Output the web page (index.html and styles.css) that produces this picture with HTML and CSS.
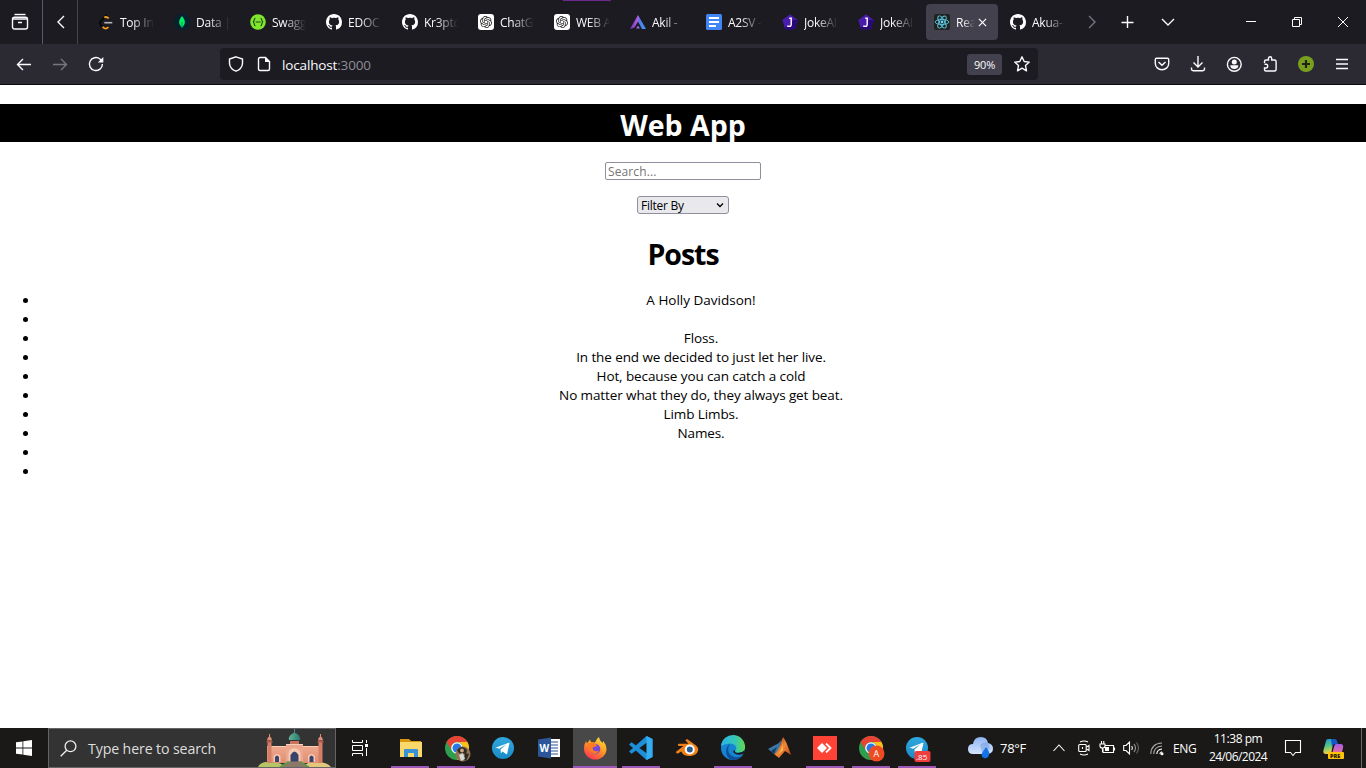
FILE: index.html
```html
<!DOCTYPE html>
<html lang="en">
<head>
<meta charset="utf-8">
<title>Web App</title>
<link rel="stylesheet" href="styles.css">
</head>
<body>
<svg class="defs" width="0" height="0">
  <defs>
    <linearGradient id="gAkil" x1="0" x2="1"><stop offset="0" stop-color="#7133b8"/><stop offset=".48" stop-color="#b45be0"/><stop offset=".6" stop-color="#4d7fe8"/><stop offset="1" stop-color="#3f95f0"/></linearGradient>
    <linearGradient id="gEdge" x1="0" y1="0" x2="1" y2="0"><stop offset="0" stop-color="#2bb4e8"/><stop offset=".6" stop-color="#35c7b4"/><stop offset="1" stop-color="#62d948"/></linearGradient>
    <linearGradient id="gFire" x1=".8" y1="0" x2=".2" y2="1"><stop offset="0" stop-color="#ffe03f"/><stop offset=".45" stop-color="#ff9a1f"/><stop offset="1" stop-color="#ff2a5a"/></linearGradient>
    <linearGradient id="gTele" x1="0" y1="0" x2="0" y2="1"><stop offset="0" stop-color="#2fa9df"/><stop offset="1" stop-color="#1b8ac6"/></linearGradient>
    <linearGradient id="gCloud" x1="0" y1="0" x2="0" y2="1"><stop offset="0" stop-color="#8db4f2"/><stop offset="1" stop-color="#d5e4ff"/></linearGradient>
    <linearGradient id="gMat" x1="0" y1="0" x2="1" y2="1"><stop offset="0" stop-color="#8c2417"/><stop offset=".5" stop-color="#f08a35"/><stop offset="1" stop-color="#b8351a"/></linearGradient>
    <linearGradient id="gMosque" x1="0" y1="0" x2="0" y2="1"><stop offset="0" stop-color="#f0a88c"/><stop offset="1" stop-color="#dd8f74"/></linearGradient>
    <linearGradient id="gDome" x1="0" y1="0" x2="1" y2="0"><stop offset="0" stop-color="#64b39a"/><stop offset="1" stop-color="#287a68"/></linearGradient>
    <linearGradient id="gCop" x1="0" y1="0" x2=".2" y2="1"><stop offset="0" stop-color="#1a8fe0"/><stop offset=".5" stop-color="#4fc48a"/><stop offset="1" stop-color="#f1d23c"/></linearGradient>
    <linearGradient id="gCop2" x1="0" y1="0" x2="0" y2="1"><stop offset="0" stop-color="#a45ce8"/><stop offset="1" stop-color="#f5728c"/></linearGradient>
    <symbol id="github" viewBox="0 0 16 16"><path fill="#fff" d="M8 0C3.580 0 0 3.580 0 8c0 3.540 2.290 6.530 5.470 7.590.4.070.55-.17.55-.38 0-.19-.01-.82-.01-1.490-2.010.37-2.530-.49-2.690-.94-.09-.23-.48-.94-.82-1.130-.28-.15-.68-.52-.01-.53.63-.01 1.080.58 1.230.82.72 1.210 1.870.87 2.330.66.07-.52.28-.87.51-1.070-1.780-.2-3.640-.89-3.640-3.950 0-.87.31-1.590.82-2.150-.08-.2-.36-1.020.08-2.120 0 0 .67-.21 2.200.82.64-.18 1.320-.27 2-.27s1.360.09 2 .27c1.530-1.040 2.200-.82 2.200-.82.44 1.100.16 1.920.08 2.120.51.56.82 1.270.82 2.150 0 3.070-1.870 3.750-3.650 3.950.29.25.54.73.54 1.480 0 1.070-.01 1.930-.01 2.200 0 .21.15.46.55.38A8.010 8.010 0 0 0 16 8c0-4.420-3.580-8-8-8z"/></symbol>
    <symbol id="gpt" viewBox="0 0 24 24"><rect width="24" height="24" rx="4.500" fill="#fff"/><path transform="translate(3 3) scale(.75)" fill="#222" d="M22.282 9.821a5.985 5.985 0 0 0-.516-4.910 6.046 6.046 0 0 0-6.510-2.900A6.065 6.065 0 0 0 4.981 4.182a5.985 5.985 0 0 0-3.998 2.900 6.046 6.046 0 0 0 .743 7.097 5.980 5.980 0 0 0 .511 4.911 6.051 6.051 0 0 0 6.515 2.900A5.985 5.985 0 0 0 13.260 24a6.056 6.056 0 0 0 5.772-4.206 5.990 5.990 0 0 0 3.998-2.900 6.056 6.056 0 0 0-.748-7.073zM13.260 22.430a4.476 4.476 0 0 1-2.876-1.040l.142-.081 4.778-2.758a.795.795 0 0 0 .393-.681v-6.737l2.020 1.169a.071.071 0 0 1 .038.052v5.583a4.504 4.504 0 0 1-4.495 4.493zM3.600 18.304a4.471 4.471 0 0 1-.535-3.014l.142.085 4.783 2.759a.771.771 0 0 0 .781 0l5.843-3.369v2.332a.080.080 0 0 1-.033.062L9.740 19.950a4.499 4.499 0 0 1-6.140-1.646zM2.341 7.896a4.485 4.485 0 0 1 2.366-1.973V11.600a.766.766 0 0 0 .388.677l5.814 3.354-2.020 1.169a.076.076 0 0 1-.071 0l-4.830-2.787A4.504 4.504 0 0 1 2.341 7.872zm16.596 3.856-5.833-3.388L15.119 7.200a.076.076 0 0 1 .071 0l4.830 2.791a4.494 4.494 0 0 1-.676 8.105v-5.678a.790.790 0 0 0-.407-.666zm2.011-3.023-.142-.085-4.774-2.782a.776.776 0 0 0-.785 0L9.409 9.230V6.897a.066.066 0 0 1 .028-.061l4.830-2.787a4.499 4.499 0 0 1 6.681 4.660zM8.307 12.863l-2.020-1.164a.080.080 0 0 1-.038-.057V6.075a4.499 4.499 0 0 1 7.376-3.453l-.142.080L8.704 5.460a.795.795 0 0 0-.393.681zm1.097-2.365 2.602-1.500 2.607 1.500v2.999l-2.597 1.500-2.607-1.500z"/></symbol>
    <symbol id="joke" viewBox="0 0 16 16"><path fill="#4a1cae" d="M8 .3 15.600 6 13 15.200H3L.4 6z"/><path fill="#2a087a" d="M15.600 6 13 15.200H3L2.400 13 8 12l3-6z"/><path fill="none" stroke="#fff" stroke-width="1.400" d="M7.200 4.200h2v6q0 2.200-2 2.200-1.200 0-1.900-.7"/></symbol>
    <symbol id="chrome" viewBox="0 0 24 24"><circle cx="12" cy="12" r="12" fill="#2f9e4d"/><path fill="#e94335" d="M1.600 6A12 12 0 0 1 22.400 6H12a6 6 0 0 0-5.600 8z"/><path fill="#fbc116" d="M22.400 6A12 12 0 0 1 12 24l5.200-9A6 6 0 0 0 12 6z"/><circle cx="12" cy="12" r="5.800" fill="#fff"/><circle cx="12" cy="12" r="4.500" fill="#2878e8"/></symbol>
    <symbol id="telegram" viewBox="0 0 24 24"><circle cx="12" cy="12" r="11" fill="url(#gTele)"/><path fill="#fff" d="m4.600 11.800 13-5q1-.3.8.8l-2.200 10q-.3 1-1.200.4l-3.300-2.500-1.800 1.700-.4-3.600 5.900-5.400-7.200 4.600-3.400-1q-1-.4-.2-1z"/></symbol>
  </defs>
</svg>

<header class="browser">
  <div class="tabstrip">
    <div class="view"><svg width="18" height="18" viewBox="0 0 18 18" class="line"><path d="M3.500 1.500h11"/><rect x="1.500" y="4.300" width="15" height="11.700" rx="2"/><path d="M1.500 6h15M7 9.500h4"/></svg></div>
    <div class="back-tabs"><svg width="10" height="14" viewBox="0 0 10 14" class="line"><path d="M8 1 2 7l6 6"/></svg></div>
    <nav class="tabs">
      <div class="tab"><svg viewBox="0 0 16 16"><path fill="none" stroke="#090909" stroke-width="2" d="M8.700 1 2.600 7.200q-1.500 1.700 0 3.600l2 2"/><path fill="none" stroke="#f7a11b" stroke-width="1.800" d="M6.300 3.500q2-1.400 4.400.9M4.600 12.800q2.600 3.300 5.800.3"/><path stroke="#b5b5b5" stroke-width="1.600" d="M6.300 8.700h8"/></svg><span>Top In</span></div>
      <div class="tab"><svg viewBox="0 0 16 16"><circle cx="8" cy="8" r="8" fill="#06202f"/><path fill="#00ed64" d="M8 2c4 4.500 3.600 8.500 0 11.300C4.400 10.500 4 6.500 8 2z"/><path stroke="#0a9a58" d="M8 8v6"/></svg><span>Data |</span></div>
      <div class="tab"><svg viewBox="0 0 16 16"><circle cx="8" cy="8" r="7.800" fill="#7fe52d"/><path fill="none" stroke="#20451b" stroke-width="1.100" d="M5.500 4.200C3.500 4.200 5 7.500 3 8c2 .5.500 3.800 2.500 3.800M10.500 4.200c2 0 .5 3.300 2.500 3.800-2 .5-.5 3.800-2.500 3.800M5.600 8h5"/></svg><span>Swagg</span></div>
      <div class="tab"><svg><use href="#github"/></svg><span>EDOC</span></div>
      <div class="tab"><svg><use href="#github"/></svg><span>Kr3ptc</span></div>
      <div class="tab"><svg><use href="#gpt"/></svg><span>ChatG</span></div>
      <div class="tab"><svg><use href="#gpt"/></svg><span>WEB A</span></div>
      <div class="tab"><svg viewBox="0 0 16 16"><path fill="url(#gAkil)" d="M8 1 16 15h-4L8 7.500 4.500 13.500 0 15zM8 11.500l2 3H6z"/></svg><span>Akil -</span></div>
      <div class="tab"><svg viewBox="0 0 16 16"><rect width="16" height="16" rx="1.500" fill="#4285f4"/><path stroke="#fff" stroke-width="2" d="M3 4h10M3 8h10M3 12h7"/></svg><span>A2SV -</span></div>
      <div class="tab"><svg><use href="#joke"/></svg><span>JokeAI</span></div>
      <div class="tab"><svg><use href="#joke"/></svg><span>JokeAI</span></div>
      <div class="tab active"><svg viewBox="0 0 16 16"><rect width="16" height="16" rx="2" fill="#222"/><g fill="none" stroke="#5ac8e0" stroke-width=".9"><ellipse cx="8" cy="8" rx="6.800" ry="2.600"/><ellipse cx="8" cy="8" rx="6.800" ry="2.600" transform="rotate(60 8 8)"/><ellipse cx="8" cy="8" rx="6.800" ry="2.600" transform="rotate(120 8 8)"/></g><circle cx="8" cy="8" r="1.400" fill="#61dafb"/></svg><span>Rea</span><svg class="close line" viewBox="0 0 10 10"><path d="m1 1 8 8M9 1 1 9"/></svg></div>
      <div class="tab"><svg><use href="#github"/></svg><span>Akua-</span></div>
    </nav>
    <div class="tab-tools">
      <svg width="10" height="14" viewBox="0 0 10 14" class="line dim"><path d="m2 1 6 6-6 6"/></svg>
      <svg width="12" height="12" viewBox="0 0 12 12" class="line"><path d="M6.500 0v12M.5 6.500h12"/></svg>
      <svg width="14" height="8" viewBox="0 0 14 8" class="line"><path d="m1 1 6 6 6-6"/></svg>
    </div>
    <div class="window-tools">
      <svg width="10" height="10" viewBox="0 0 10 10" class="thin"><path d="M0 4.500h10"/></svg>
      <svg width="10" height="10" viewBox="0 0 10 10" class="thin"><path d="M.5 2.500h7v7h-7zM2.500 2.500v-2h7v7h-2"/></svg>
      <svg width="10" height="10" viewBox="0 0 10 10" class="thin"><path d="m0 0 10 10M10 0 0 10"/></svg>
    </div>
  </div>
  <div class="toolbar">
    <div class="nav-tools">
      <svg width="16" height="16" viewBox="0 0 16 16" class="line"><path d="M15 8.500H1.500M7 3 1.500 8.500 7 14"/></svg>
      <svg width="16" height="16" viewBox="0 0 16 16" class="line dim"><path d="M1 8.500h13.500M9 3l5.500 5.500L9 14"/></svg>
      <svg width="16" height="16" viewBox="0 0 16 16" class="line"><path d="M14.400 8A6.500 6.500 0 1 1 12 3l2 2"/><path fill="#fbfbfe" stroke="none" d="M15.300 1v5.500H9.800z"/></svg>
    </div>
    <div class="urlbar">
      <svg width="16" height="16" viewBox="0 0 16 16" class="line"><path d="M8 .8 14.500 3v4.500q-.5 5.500-6.500 7.700Q2 13 1.500 7.500V3z"/></svg>
      <svg width="14" height="16" viewBox="0 0 14 16" class="line"><path d="M3 1.500h5.500l4 4V13q0 1.500-1.500 1.500H3q-1.500 0-1.500-1.500V3q0-1.500 1.500-1.500z"/><path fill="#fbfbfe" stroke="none" d="M8 1v5h5z"/></svg>
      <span class="url">localhost<i>:3000</i></span>
      <span class="zoom">90%</span>
      <svg width="16" height="16" viewBox="0 0 16 16" class="line"><path stroke-linejoin="round" d="m8 .8 2.200 4.700 5.100.6-3.800 3.500 1 5.200L8 12.200l-4.500 2.600 1-5.200L.7 6.100l5.100-.6z"/></svg>
    </div>
    <div class="ext-tools">
      <svg width="16" height="16" viewBox="0 0 16 16" class="line"><path d="M2.500 2.200h11q1.200 0 1.200 1.200V7.500a6.500 6 0 0 1-13.400 0V3.400q0-1.200 1.200-1.200zM4.500 6 8 9.300 11.500 6"/></svg>
      <svg width="16" height="16" viewBox="0 0 16 16" class="line"><path d="M8 0v10.500M3.500 6.500 8 11l4.500-4.500M1.500 11.500V13q0 1.700 1.700 1.700h9.600q1.700 0 1.700-1.700v-1.500"/></svg>
      <svg width="16" height="16" viewBox="0 0 16 16" class="line"><circle cx="8.300" cy="8.300" r="6.900"/><circle cx="8.300" cy="5.900" r="2.500" fill="#fbfbfe" stroke="none"/><path fill="#fbfbfe" stroke="none" d="M4.300 9.300h8q0 3.800-4 3.800t-4-3.800z"/></svg>
      <svg width="16" height="16" viewBox="0 0 16 16" class="line"><path d="M2.500 7V5.500Q2.500 4 4 4h2.500V2.500q0-1.700 1.600-1.700t1.600 1.700V4h2.800q1.600 0 1.600 1.500v8q0 1.500-1.600 1.500H4q-1.500 0-1.500-1.500V12H4q1.700 0 1.700-1.900T4 8.200H2.500"/></svg>
      <svg width="16" height="16" viewBox="0 0 16 16"><circle cx="8" cy="8" r="8" fill="#78a01e"/><path stroke="#202514" stroke-width="2.200" d="M8 4v8M4 8h8"/></svg>
      <svg width="14" height="16" viewBox="0 0 14 16" class="line"><path d="M1 3.500h12M1 8h12M1 12.500h12"/></svg>
    </div>
  </div>
</header>

<main class="page">
  <h1 class="title">Web App</h1>
  <input class="search" type="text" placeholder="Search...">
  <div class="select"><span>Filter By</span><svg width="8" height="6" viewBox="0 0 8 6"><path fill="none" stroke="#000" stroke-width="1.300" d="m1 1.500 3 3 3-3"/></svg></div>
  <h2 class="posts">Posts</h2>
  <ul class="list">
    <li>A Holly Davidson!</li>
    <li></li>
    <li>Floss.</li>
    <li>In the end we decided to just let her live.</li>
    <li>Hot, because you can catch a cold</li>
    <li>No matter what they do, they always get beat.</li>
    <li>Limb Limbs.</li>
    <li>Names.</li>
    <li></li>
    <li></li>
  </ul>
</main>

<footer class="taskbar">
  <div class="start"><svg width="16" height="16" viewBox="0 0 16 16"><path fill="#fff" d="m0 2.300 6.500-.9v6.200H0zM7.300 1.300 16 0v7.600H7.300zM0 8.400h6.500v6.200L0 13.700zM7.300 8.400H16V16l-8.700-1.300z"/></svg></div>
  <div class="searchbox">
    <svg width="17" height="17" viewBox="0 0 17 17"><g fill="none" stroke="#eee" stroke-width="1.300"><circle cx="10.500" cy="6.300" r="5.400"/><path d="M6.700 10.200.7 16.200"/></g></svg>
    <span>Type here to search</span>
    <svg class="mosque" width="74" height="38" viewBox="0 0 74 38">
      <path fill="#b5c565" d="M-1 38q3-6 13-5 10 0 14 5z"/><path fill="#e2c77d" d="M44 38q5-6 14-5 10 0 14 5z"/>
      <path fill="url(#gMosque)" d="M8 17h54v17H8z"/>
      <path fill="#d67f66" d="M8.500 12h4v22h-4zM59.500 12h4v22h-4z"/>
      <path fill="#b3594b" d="M7.500 12h6v1.500h-6zM58.500 12h6v1.500h-6z"/>
      <path fill="#e08d73" d="M8 11.500q0-3 2.500-4.500 2.500 1.500 2.500 4.500zM59 11.500q0-3 2.500-4.500 2.500 1.500 2.500 4.500z"/>
      <path stroke="#e08d73" d="M10.500 5v3M61.500 5v3"/>
      <path fill="#ca745d" d="M31 12h9v3.500h-9z"/>
      <path fill="url(#gDome)" d="M30 11q-1-5 5.500-7.500Q42 6 41 11z"/><path stroke="#398f7b" d="M35.500 0v4"/>
      <path stroke="#f9cdb8" d="M13 17.500h14M27 15.500h17M44 17.500h15"/><path fill="#eda78d" d="M27 16h17v18H27z"/>
      <path fill="#f8c9b2" d="M29.500 34V25q0-5 6-6 6 1 6 6v9zM14.500 33v-6q3.500-4 7 0v6zM49 33v-6q3.500-4 7 0v6z"/>
      <path fill="#394369" d="M31.500 33v-7q4-7 8 0v7zM16 33v-5q2-3 4 0v5zM50.500 33v-5q2-3 4 0v5z"/>
      <path fill="#69934c" d="m29 32-9 6h8l5-5zM42 32l9 6h-8l-5-5z"/>
      <path fill="#8b7868" d="M32 32.500h7.500l7 5.500h-22z"/>
    </svg>
  </div>
  <div class="taskview"><svg width="16" height="16" viewBox="0 0 16 16" class="thin"><path d="M.5 0v2.500h10V0M.5 5.500h10v5H.5zM.5 16v-2.500h10V16M14.500 0v3M14.500 8v8"/><path fill="#fff" stroke="none" d="M13 4h3v3h-3z"/></svg></div>
  <div class="apps">
    <div class="app on"><svg viewBox="0 0 24 24"><path fill="#d9970c" d="M1 3h9l2 2h10v4H1z"/><path fill="#fbd86b" d="M1 6h22v15H1z"/><path fill="#3892d6" d="M5 21v-7q0-1 1-1h12q1 0 1 1v7h-4v-4H9v4z"/></svg></div>
    <div class="app on"><svg viewBox="0 0 24 24"><use href="#chrome"/><circle cx="18" cy="18" r="7.500" fill="#8e7354"/><path fill="#302923" d="M12 14q5-6 10 0l-1 4-7-1z"/><circle cx="17" cy="14.500" r="1.900" fill="#d0a482"/><path fill="#302923" d="m20 17 4 1-3 7-2-1z"/><path fill="#d8d8d4" d="m14 19 4-2 2 6-4 2z"/></svg></div>
    <div class="app"><svg><use href="#telegram"/></svg></div>
    <div class="app"><svg viewBox="0 0 24 24"><path fill="#fff" d="M11 3h12v18H11z"/><path stroke="#2b579a" stroke-width="1.200" d="M14 6h7M14 9h7M14 12h7M14 15h7M14 18h7"/><path fill="#2b579a" d="m1 3.500 13-2v21l-13-2z"/><text x="2.500" y="16" class="word">W</text></svg></div>
    <div class="app on current"><svg viewBox="0 0 24 24"><path fill="url(#gFire)" d="M1 13Q1 8 3 5l1 2.500L7 3.500 8 6l4 .5Q13 3 16 1q0 3 3.500 6l.8-2Q23.500 9 23.500 13a11.200 10.500 0 0 1-22.500 0z"/><circle cx="12" cy="13" r="5.300" fill="#7548db"/><path fill="#ff7a20" d="M5 8q3-2 6-1 2 1 3 2.500-1 1.500-4 1.500-1 3 2 4 3 1 4-1-1 4-5 4-6-2-6-10z"/></svg></div>
    <div class="app on"><svg viewBox="0 0 24 24"><path fill="#1d8fd8" d="m17.500 0 6 3v18l-6 3L0 8.500l2.500-2.300L18 17.500v-11L2.500 17.800 0 15.500z"/><path fill="#35adf2" d="m17.500 0 6 3v18l-6 3z"/></svg></div>
    <div class="app"><svg viewBox="0 0 24 24"><path fill="#ee8017" d="M10.500 4.500q.5-1.700 2-1.200L21 9.500q2.500 2 2.200 5a9 7.500 0 0 1-17 1L3 17.500q-2 .3-2-1.800L8.500 10H3.500Q2 8.500 3.500 7.700h10z"/><circle cx="14.800" cy="13.500" r="5" fill="#fff"/><circle cx="14.800" cy="13.500" r="3" fill="#245b91"/></svg></div>
    <div class="app on"><svg viewBox="0 0 24 24"><circle cx="12" cy="12" r="12" fill="#1685d1"/><path fill="url(#gEdge)" d="M0 10A12 12 0 0 1 24 12q-1 5-7 4.500-3 0-3-2 2-1 1-4-2-3-6-3-5 0-9 2.500z"/><path fill="#0d4f98" d="M9 8q-3 4-1 9 3 5 10 4l3-1q-4 4-9 4C4 23 3 11 9 8z"/><path fill="#1a1918" d="M14 14q-1 3 3 3 4 0 7-3l-1.500 4q-6 2-9.500-1-2-2 1-3z"/></svg></div>
    <div class="app"><svg viewBox="0 0 24 24"><path fill="#3878a8" d="m1 13 7-4q4-1 7-6l-4 13-4 2z"/><path fill="#173c5e" d="m4 15 6-4-3 7z"/><path fill="url(#gMat)" d="M16 1q3 3 8 18l-6-4-6 7-5-4q4-1 9-17z"/><path fill="#f9c25d" d="M15 5q1 8-4 14l5-5z"/></svg></div>
    <div class="app on"><svg viewBox="0 0 24 24"><path fill="#ff4337" d="M0 0h24v24H0z"/><path fill="#fff" d="m9 7 5 5-5 5-5-5z"/><path fill="none" stroke="#fff" stroke-width="1.800" d="m13 7.500 4.500 4.500-4.500 4.500"/></svg></div>
    <div class="app on"><svg viewBox="0 0 24 24"><use href="#chrome"/><circle cx="17.500" cy="17.500" r="8" fill="#ef4b23"/><text x="14.500" y="21.300" class="letter">A</text></svg></div>
    <div class="app on"><svg viewBox="0 0 24 24"><use href="#telegram"/><rect x="9.500" y="15" width="16" height="11" rx="2" fill="#ef3e3e"/><text x="11" y="23.800" class="count">.85</text></svg></div>
  </div>
  <div class="weather"><svg width="25" height="22" viewBox="0 0 25 22"><path fill="url(#gCloud)" d="M5 17q-5 0-5-5t5-5q1-7 8-7 6 0 7 6 5 1 5 5.500T20 17z"/><path fill="#6f99e0" opacity=".5" d="M12 8q4-4 8-2l2 6-8 3z"/><path fill="#1473e6" d="M18 10q4 5 3 8-1.500 4-5 3-3.500-1.500-2-5z"/></svg><span>78°F</span></div>
  <div class="tray">
    <svg width="12" height="8" viewBox="0 0 12 8" class="trayline"><path d="m.5 7 5.500-6 5.500 6"/></svg>
    <svg width="12" height="16" viewBox="0 0 12 16" class="trayline"><rect x=".7" y="4.500" width="7.500" height="7" rx="1"/><path d="m8.500 7 2.500-1.500v5L8.500 9M2 2q4-2 8 0M2 14q4 2 8 0M4.500 7v2"/></svg>
    <svg width="16" height="14" viewBox="0 0 16 14" class="trayline"><path d="M6 4.500h8.500v7H4V8M15.500 6.500v3M1 3h5v2Q6 7 3.500 7T1 5zM2.500 0v3M4.800 0v3M3.500 7v4"/><path fill="#fff" stroke="none" d="M6 6h4v4H6z"/></svg>
    <svg width="17" height="14" viewBox="0 0 17 14" class="trayline"><path d="M.7 4.500H3L6.500 1v12L3 9.500H.7zM8.700 5q1.500 2 0 4"/><path stroke="#999" d="M11 3q3 4 0 8"/><path stroke="#666" d="M13.500 1.500q4 5.500 0 11"/></svg>
    <svg width="14" height="14" viewBox="0 0 14 14" class="trayline"><path stroke="#aaa" d="M.8 13Q1 2.500 12 2M3.800 13Q4 5.500 12 5"/><path d="M6.800 13q.2-4.500 5.200-5M9.800 13q.2-2 2.200-2.300"/><circle cx="12" cy="12.700" r="1" fill="#fff"/></svg>
    <span class="lang">ENG</span>
  </div>
  <div class="clock"><span>11:38 pm</span><span class="date">24/06/2024</span></div>
  <div class="notice"><svg width="17" height="17" viewBox="0 0 17 17" class="trayline"><path d="M.5.500h15v12h-5L8 15.500 5.500 12.500h-5z"/></svg></div>
  <div class="copilot"><svg width="21" height="20" viewBox="0 0 21 20"><path fill="url(#gCop)" d="M5 0h6L8 15H3q-3.500 0-2.500-4L3 2q.5-2 2-2z"/><path fill="#1458c8" d="M8 0h4q1.500 0 2 2l1 3h-3q-2 0-3 3z"/><path fill="url(#gCop2)" d="M13 5h4.500q3.500 0 2.500 4l-1.500 6H9l2-7q.5-3 2-3z"/><rect x="5" y="13" width="16" height="7" rx="1" fill="#ffc20a"/><text x="7" y="18.700" class="pre">PRE</text></svg></div>
</footer>
</body>
</html>
```

FILE: styles.css
```css
* { box-sizing: border-box; }
body {
  margin: 0;
  width: 1366px;
  height: 768px;
  overflow: hidden;
  display: flex;
  flex-direction: column;
  background: #fff;
  font-family: "Open Sans", "Noto Sans", sans-serif;
}
svg { display: block; flex: none; overflow: visible; }
.defs { position: absolute; }
.line { fill: none; stroke: #fbfbfe; stroke-width: 1.4; }
.thin { fill: none; stroke: #fff; stroke-width: 1; }
.trayline { fill: none; stroke: #fff; stroke-width: 1.1; }
.dim { stroke: #77767d; }

/* Browser chrome */
.browser { flex: none; height: 85px; background: #2b2a33; border-bottom: 1px solid #0c0b10; }
.tabstrip {
  height: 44px;
  display: flex;
  align-items: stretch;
  background: linear-gradient(#6c2a91, #6c2a91) 563px 0 / 48px 1px no-repeat #1c1b22;
}
.view { width: 43px; padding: 13px 0 0 11px; border-right: 1px solid #5b5a62; }
.back-tabs { width: 35px; padding: 15px 0 0 13px; border-right: 1px solid #47464e; }
.tabs { display: flex; padding: 4px 0 4px 12px; gap: 4px; width: 998px; }
.tab {
  flex: none;
  width: 72px;
  height: 36px;
  padding: 0 8px;
  display: flex;
  align-items: center;
  gap: 6px;
  border-radius: 4px;
  color: #fbfbfe;
  font-size: 12px;
  letter-spacing: -0.25px;
}
.tab svg { width: 16px; height: 16px; }
.tab span {
  width: 34px;
  padding-top: 1px;
  white-space: nowrap;
  -webkit-mask-image: linear-gradient(90deg, #000 35%, transparent);
  mask-image: linear-gradient(90deg, #000 35%, transparent);
}
.tab.active { background: #42414d; }
.tab.active span { width: 19px; }
.tab .close { width: 9px; height: 9px; margin-left: -3px; }
.tab-tools { display: flex; align-items: center; gap: 28px; width: 150px; padding-left: 11px; }
.tab-tools svg:first-child { margin-right: -4px; }
.window-tools { display: flex; align-items: center; gap: 36px; padding-left: 20px; }
.toolbar { height: 40px; display: flex; align-items: center; }
.nav-tools { width: 220px; display: flex; gap: 20px; padding-left: 16px; }
.urlbar {
  width: 818px;
  height: 32px;
  display: flex;
  align-items: center;
  padding: 0 8px;
  border-radius: 4px;
  background: #1c1b22;
}
.urlbar svg:nth-child(2) { margin-left: 13px; }
.url { margin-left: 11px; padding-top: 1px; flex: 1; color: #fbfbfe; font-size: 13.5px; letter-spacing: -0.15px; }
.url i { color: #8f8e96; font-style: normal; }
.zoom {
  width: 35px;
  height: 21px;
  line-height: 21px;
  margin-right: 12px;
  border-radius: 3px;
  background: #42414d;
  color: #fbfbfe;
  font-size: 11px;
  text-align: center;
  letter-spacing: -0.2px;
}
.ext-tools { display: flex; gap: 20px; padding-left: 116px; }
.ext-tools svg:last-child { margin-left: 1px; }

/* Page */
.page { flex: 1; display: flex; flex-direction: column; align-items: center; padding-top: 19px; color: #000; }
.title {
  align-self: stretch;
  height: 38px;
  margin: 0 0 20px;
  line-height: 42px;
  background: #000;
  color: #fff;
  font-size: 28.5px;
  font-weight: 700;
  text-align: center;
}
.search {
  width: 156px;
  height: 18px;
  margin: 0 0 16px;
  padding: 0 2px;
  border: 1px solid #8f8f9d;
  border-radius: 2px;
  font: 12px "Open Sans", sans-serif;
  letter-spacing: 0.12px;
}
.search::placeholder { color: #757575; }
.select {
  width: 92px;
  height: 18px;
  padding: 0 4px 0 3px;
  display: flex;
  align-items: center;
  justify-content: space-between;
  border: 1px solid #8f8f9d;
  border-radius: 3px;
  background: #e9e9ed;
  font-size: 12px;
  letter-spacing: -0.25px;
}
.posts { height: 38px; margin: 20px 0 19px; line-height: 40px; font-size: 28.5px; font-weight: 700; letter-spacing: -1px; }
.list { align-self: stretch; margin: 0; padding: 0 0 0 36px; font-size: 13.5px; letter-spacing: -0.1px; text-align: center; list-style: none; }
.list li { height: 19px; line-height: 19px; display: flex; align-items: center; justify-content: center; }
.list li::before { content: ""; width: 5px; height: 5px; margin: 0 auto 0 -13px; border-radius: 50%; background: #000; }
.list li::after { content: ""; width: 5px; margin: 0 -13px 0 auto; }
.list li:first-child { letter-spacing: 0; }

/* Taskbar */
.taskbar { flex: none; height: 40px; display: flex; background: #1a1918; color: #fff; }
.start { width: 48px; padding: 12px 0 0 16px; }
.searchbox {
  width: 288px;
  display: flex;
  align-items: center;
  padding-left: 11px;
  border: 1px solid #656565;
  background: #333;
  color: #dedede;
  font-size: 14.2px;
}
.searchbox span { margin-left: 11px; width: 171px; white-space: nowrap; letter-spacing: -0.13px; }
.mosque { align-self: flex-end; }
.taskview { width: 51px; padding: 12px 0 0 16px; }
.apps { display: flex; width: 553px; }
.app { width: 46px; height: 40px; padding: 8px 0 0 12px; }
.app svg { width: 24px; height: 24px; }
.app.on { background: linear-gradient(#9a57b8, #9a57b8) 4px 38px / 38px 2px no-repeat; }
.app:nth-child(n+6).on { background-position: 5px 38px; }
.app.current { background: linear-gradient(#9a57b8, #9a57b8) 2px 38px / 45px 2px no-repeat, linear-gradient(#494848, #494848) 2px 0 / 45px 40px no-repeat; }
.word { fill: #fff; font: 700 10px "Open Sans"; }
.letter { fill: #fff; font: 9px "Open Sans"; }
.count { fill: #fff; font: 8px "Open Sans"; }
.pre { fill: #241b00; font: 800 5.5px "Open Sans"; }
.weather { width: 112px; display: flex; align-items: center; gap: 8px; padding-left: 28px; font-size: 13px; letter-spacing: -0.3px; }
.weather span { margin-left: -1px; }
.tray { width: 148px; display: flex; align-items: center; gap: 10px; padding-left: 1px; }
.tray svg:nth-child(2) { margin: 0 -1px 0 3px; }
.tray svg:nth-child(3) { margin-right: -2px; }
.lang { margin-left: -1px; font-size: 12px; letter-spacing: -0.3px; }
.clock { width: 76px; display: flex; flex-direction: column; align-items: center; padding-top: 2px; font-size: 12px; line-height: 18px; letter-spacing: -0.45px; }
.date { letter-spacing: -0.55px; }
.notice { width: 41px; padding: 12px 0 0 9px; }
.copilot { flex: 1; margin-right: 4px; padding: 11px 0 0 6px; border-right: 1px solid #686868; }
```
